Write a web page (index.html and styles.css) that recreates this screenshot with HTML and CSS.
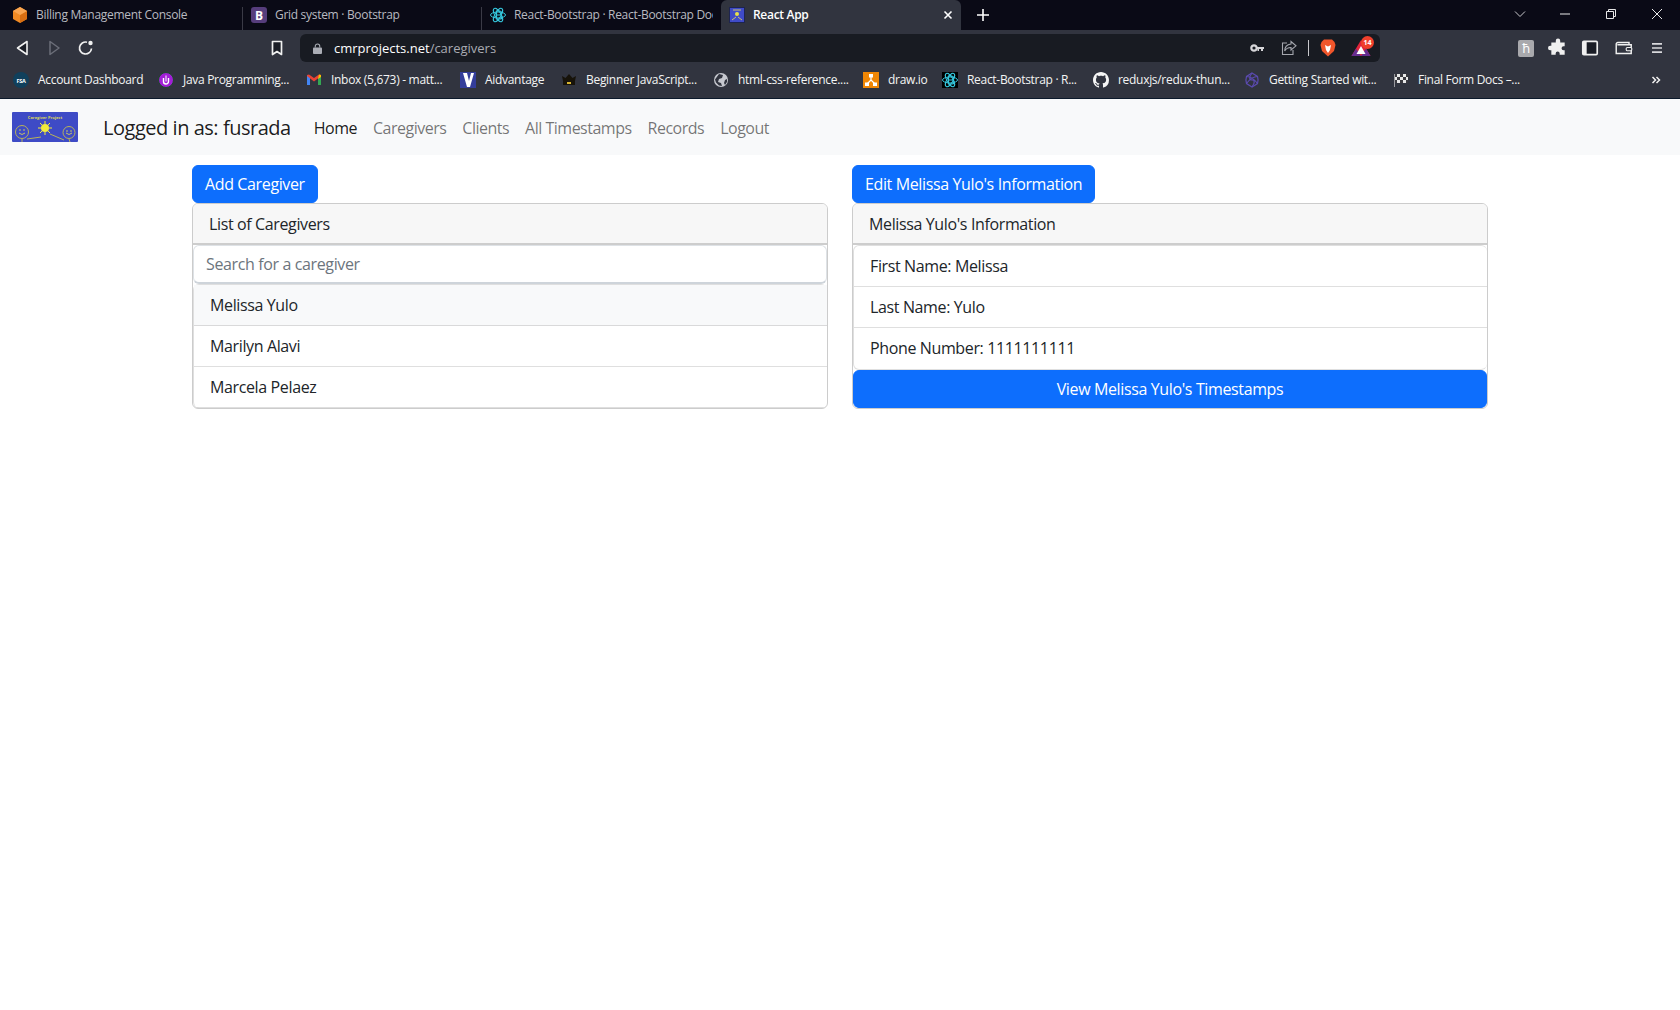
FILE: index.html
```html
<!DOCTYPE html>
<html lang="en">
<head>
<meta charset="utf-8">
<title>React App</title>
<link rel="stylesheet" href="styles.css">
</head>
<body>
<svg class="defs" width="0" height="0" aria-hidden="true">
  <defs>
    <symbol id="rb" viewBox="0 0 16 16">
      <g fill="none" stroke="#35c6dc" stroke-width="1">
        <ellipse cx="8" cy="8" rx="7.5" ry="3"/>
        <ellipse cx="8" cy="8" rx="7.5" ry="3" transform="rotate(60 8 8)"/>
        <ellipse cx="8" cy="8" rx="7.5" ry="3" transform="rotate(120 8 8)"/>
        <path d="M6.5 4h3a2 2 0 0 1 0 4h-3zM6.5 8h3.5a2 2 0 0 1 0 4H6.5z" stroke-width="1.2"/>
      </g>
    </symbol>
  </defs>
</svg>

<header class="browser">
  <div class="tabstrip">
    <div class="tab sep">
      <svg class="ico" viewBox="0 0 16 16"><path d="M8 0l7 4v8l-7 4-7-4V4z" fill="#f08a24"/><path d="M8 8l7-4v8l-7 4z" fill="#d96f12"/><path d="M8 0l7 4-7 4-7-4z" fill="#f9a550"/></svg>
      <span class="tab-title">Billing Management Console</span>
    </div>
    <div class="tab sep">
      <svg class="ico" viewBox="0 0 16 16"><rect width="16" height="16" rx="3" fill="#563d7c"/><text x="8" y="12.5" class="bs-b">B</text></svg>
      <span class="tab-title">Grid system · Bootstrap</span>
    </div>
    <div class="tab">
      <svg class="ico"><use href="#rb"/></svg>
      <span class="tab-title">React-Bootstrap · React-Bootstrap Docs</span>
    </div>
    <div class="tab tab-active">
      <svg class="ico" viewBox="0 0 16 16"><rect width="16" height="16" fill="#3f4bc8"/><rect x=".5" y=".5" width="15" height="15" fill="none" stroke="#1d2450"/><circle cx="8" cy="7" r="2" fill="#e8e04a"/><path d="M3 13l4-3M13 13l-4-3M4 3h8" stroke="#c9c070"/></svg>
      <span class="tab-title">React App</span>
      <svg class="tab-x" viewBox="0 0 10 10"><path d="M1.5 1.5l7 7M8.5 1.5l-7 7" stroke="#fff" stroke-width="1.6"/></svg>
    </div>
    <svg class="tab-plus" viewBox="0 0 12 12"><path d="M6 0v12M0 6h12" stroke="#fff" stroke-width="1.6"/></svg>
    <div class="win-controls">
      <svg class="win-chev" viewBox="0 0 12 12"><path d="M1 3.5l5 5 5-5" fill="none" stroke="#c8c8cc"/></svg>
      <svg class="win-ico" viewBox="0 0 12 12"><path d="M1 6h10" stroke="#e8e8e8"/></svg>
      <svg class="win-ico" viewBox="0 0 12 12"><path d="M1.5 3.5h7v7h-7zM3.5 3.5v-2h7v7h-2" fill="none" stroke="#e8e8e8"/></svg>
      <svg class="win-ico" viewBox="0 0 12 12"><path d="M1 1l10 10M11 1L1 11" stroke="#e8e8e8"/></svg>
    </div>
  </div>

  <div class="toolbar">
    <svg class="tb-ico tb-back" viewBox="0 0 20 20"><path d="M15 3.5v13L5.500 10z" fill="#1a1d26" stroke="#f0f0f0" stroke-width="1.600" stroke-linejoin="round"/></svg>
    <svg class="tb-ico tb-fwd" viewBox="0 0 20 20"><path d="M6 3.5v13l9-6.5z" fill="none" stroke="#6b6e79" stroke-width="1.5" stroke-linejoin="round"/></svg>
    <svg class="tb-ico tb-reload" viewBox="0 0 20 20"><path d="M15.500 10.500A6 6 0 1 1 11 4.200" fill="none" stroke="#f0f0f0" stroke-width="1.700"/><circle cx="14.500" cy="5" r="2.200" fill="#f0f0f0"/></svg>
    <svg class="tb-ico tb-mark" viewBox="0 0 20 20"><path d="M5.500 3.500h9v13L10 13.500 5.500 16.500z" fill="#1a1d26" stroke="#f0f0f0" stroke-width="1.700" stroke-linejoin="round"/></svg>
    <div class="urlbar">
      <svg class="lock" viewBox="0 0 10 12"><path d="M2.500 5V3.500a2.500 2.500 0 0 1 5 0V5" fill="none" stroke="#aaadb5" stroke-width="1.200"/><rect y="5" width="10" height="7" rx="1" fill="#aaadb5"/></svg>
      <span class="url"><span class="url-host">cmrprojects.net</span>/caregivers</span>
      <svg class="key" viewBox="0 0 14 8"><circle cx="4" cy="4" r="2.700" fill="none" stroke="#d5d5d8" stroke-width="2.200"/><path d="M6 3h8v2h-1v2h-2V5H9v2H7.500V5H6z" fill="#d5d5d8"/></svg>
      <svg class="share" viewBox="0 0 16 16"><path d="M6 3H1.500v11.500H12V10" fill="none" stroke="#a5a7ae" stroke-width="1.100"/><path d="M10 1.500l5 4.300-5 4.200V7.500c-3 0-5 1-6.300 3.500 0-3.500 2-6.500 6.300-7z" fill="none" stroke="#a5a7ae" stroke-width="1.100"/></svg>
      <span class="url-divider"></span>
      <svg class="brave" viewBox="0 0 16 18"><path d="M4 .500h8l2.500 2.500 1 3-1.500 6-6 5.500-6-5.500-1.500-6 1-3z" fill="#f1562b"/><path d="M5 6l3 1.500L11 6l-1 5-2 3-2-3z" fill="#fff"/></svg>
      <span class="bat">
        <svg class="bat-ico" viewBox="0 0 20 18"><path d="M10 1l9.500 16H.5z" fill="#e0243a"/><path d="M.5 17L5 9.500 10 17z" fill="#662d91"/><path d="M19.500 17L15 9.500 10 17z" fill="#662d91"/><path d="M10 7l4.500 8h-9z" fill="#fff"/></svg>
        <span class="bat-badge">14</span>
      </span>
    </div>
    <span class="ext-k">ħ</span>
    <svg class="tb-ico tb-puzzle" viewBox="-1 -1 18 18"><path d="M6 1.500a2 2 0 0 1 4 0V3h4v3.500h-1a1.800 1.800 0 0 0 0 3.600h1V14H9.500v-1a1.800 1.800 0 0 0-3.600 0v1H2v-4H1a2 2 0 0 1 0-4h1V3h4z" fill="#f0f0f0"/></svg>
    <svg class="tb-ico tb-side" viewBox="-1 -1 18 18"><rect x="1.500" y="2" width="13" height="12" rx="1" fill="#1a1d26" stroke="#f0f0f0" stroke-width="1.500"/><rect x="1.500" y="2" width="3.500" height="12" fill="#f0f0f0"/></svg>
    <svg class="tb-ico tb-wallet" viewBox="-1 -1 18 18"><path d="M1 4.500A1.500 1.500 0 0 1 2.500 3h10v2M1 4.500V13h13.500V5H2" fill="none" stroke="#f0f0f0" stroke-width="1.300"/><rect x="10" y="7.500" width="5" height="3" rx="1" fill="#31343f" stroke="#f0f0f0"/></svg>
    <svg class="tb-ico tb-menu" viewBox="-3 -3 22 22"><path d="M2.500 3.500h11M2.500 8h11M2.500 12.500h11" stroke="#d8d8dc" stroke-width="1.800"/></svg>
  </div>

  <nav class="bookmarks">
    <a class="bm"><svg class="ico" viewBox="0 0 16 16"><circle cx="8" cy="8" r="8" fill="#10405c"/><text x="8" y="10.500" class="fsa">FSA</text></svg><span>Account Dashboard</span></a>
    <a class="bm"><svg class="ico" viewBox="0 0 16 16"><circle cx="8" cy="8" r="7.500" fill="#a11fd6" stroke="#1a4a2a"/><path d="M5.500 6v3.500a2.500 2.500 0 0 0 5 0V6" fill="none" stroke="#fff" stroke-width="1.400"/><path d="M8 3.500v6" stroke="#fff"/></svg><span>Java Programming...</span></a>
    <a class="bm"><svg class="ico" viewBox="0 0 16 16"><path d="M1 13V4l3 0v9z" fill="#4285f4"/><path d="M12 13V4h3v9z" fill="#34a853"/><path d="M1 4l7 5.500L15 4v-1l-2-.500L8 6 3 2.500 1 3z" fill="#ea4335"/><path d="M13 2.500L15 3v2l-3 2z" fill="#fbbc04"/></svg><span>Inbox (5,673) - matt...</span></a>
    <a class="bm"><svg class="ico" viewBox="0 0 16 16"><rect width="16" height="16" fill="#333d9a"/><path d="M3 1h4l2 8 2-8h3L10 15H7z" fill="#fff"/></svg><span>Aidvantage</span></a>
    <a class="bm"><svg class="ico" viewBox="0 0 16 16"><path d="M2 9L1 4l3.500 2L8 2l3.500 4L15 4l-1 5z" fill="#17130a"/><rect x="2" y="9" width="12" height="4" fill="#17130a"/><rect x="6" y="10" width="4" height="2" fill="#d8b430"/></svg><span>Beginner JavaScript...</span></a>
    <a class="bm"><svg class="ico" viewBox="0 0 16 16"><circle cx="8" cy="8" r="7" fill="#c6c8cf"/><path d="M6 2l4 1-1 3-3 1-1 3 3 1 1 3-3-.500-3-3-1-3z" fill="#31343f"/><path d="M12 8l2-1 0 3-2 3-1-2z" fill="#31343f"/></svg><span>html-css-reference....</span></a>
    <a class="bm"><svg class="ico" viewBox="0 0 16 16"><rect width="16" height="16" fill="#f08705"/><path d="M8 5v3M8 8l-4 4M8 8l4 4" stroke="#fff" stroke-width="1.200"/><rect x="6" y="2" width="4" height="3.500" fill="#fff"/><rect x="2" y="10.500" width="4" height="3.500" fill="#fff"/><rect x="10" y="10.500" width="4" height="3.500" fill="#fff"/></svg><span>draw.io</span></a>
    <a class="bm"><svg class="ico ico-black"><use href="#rb"/></svg><span>React-Bootstrap · R...</span></a>
    <a class="bm"><svg class="ico" viewBox="0 0 16 16"><path fill="#f5f5f5" d="M8 0C3.580 0 0 3.580 0 8c0 3.540 2.290 6.530 5.470 7.590.4.070.55-.170.55-.380 0-.190-.010-.820-.010-1.490-2.010.370-2.530-.490-2.690-.940-.090-.230-.480-.940-.820-1.130-.280-.150-.680-.520-.010-.530.630-.010 1.080.580 1.230.820.720 1.210 1.870.870 2.330.660.070-.520.280-.870.510-1.070-1.780-.200-3.640-.890-3.640-3.950 0-.870.310-1.590.820-2.150-.080-.200-.360-1.020.080-2.120 0 0 .670-.210 2.200.820.640-.180 1.320-.270 2-.270s1.360.090 2 .270c1.530-1.040 2.200-.820 2.200-.820.440 1.100.160 1.920.080 2.120.510.560.820 1.270.820 2.150 0 3.070-1.870 3.750-3.650 3.950.290.250.540.730.540 1.480 0 1.070-.010 1.930-.010 2.200 0 .210.150.460.550.380A8.013 8.013 0 0 0 16 8c0-4.420-3.580-8-8-8z"/></svg><span>reduxjs/redux-thun...</span></a>
    <a class="bm"><svg class="ico" viewBox="0 0 16 16"><g fill="none" stroke="#5b4bb0" stroke-width="1.200"><path d="M8 1l5.500 3.500c1 3 1 4 0 7L8 15l-5.500-3.500c-1-3-1-4 0-7z"/><path d="M8 1C5 5 5 8 8 8s3 3 0 7M2.500 4.500c4 0 8 3 11 7M13.500 4.500c-4 0-8 3-11 7"/></g></svg><span>Getting Started wit...</span></a>
    <a class="bm"><svg class="ico" viewBox="0 0 16 16"><path d="M1 2l14 0v9l-14 0z" fill="#e8e8e8"/><path d="M1 2h3v3H1zM7 2h3v3H7zM13 2h2v3h-2zM4 5h3v3H4zM10 5h3v3h-3zM1 8h3v3H1zM7 8h3v3H7zM13 8h2v3h-2z" fill="#3a3a40"/><path d="M1.500 2v13" stroke="#9a9a9f"/></svg><span>Final Form Docs –...</span></a>
    <svg class="bm-more" viewBox="0 0 10 10"><path d="M1.500 2l3 3-3 3M5.500 2l3 3-3 3" fill="none" stroke="#f0f0f0" stroke-width="1.500"/></svg>
  </nav>
</header>

<nav class="navbar">
  <svg class="logo" viewBox="0 0 66 30">
    <rect width="66" height="30" rx="1" fill="#3e4bc6"/>
    <text x="33" y="6.500" class="logo-text">Caregiver Project</text>
    <g fill="none" stroke="#b7b25a" stroke-width="1">
      <circle cx="10" cy="20" r="6.500"/><circle cx="57" cy="20.500" r="6"/>
      <path d="M15 27l14-2M38 22l14 6M10 27v3M57 27l1 3"/>
    </g>
    <g fill="none" stroke="#e8e24a" stroke-width=".8">
      <path d="M7 21q3 3 6 0M54 21q3 3 6 0"/>
      <path d="M8 17v2M12 17v2M55 18v2M59 18v2"/>
    </g>
    <circle cx="33" cy="16" r="4" fill="#f2ec3a"/>
    <path d="M33 9v3M33 20v3M26 16h3M37 16h3M28 11l2 2M38 11l-2 2M28 21l2-2M38 21l-2-2" stroke="#f2ec3a"/>
  </svg>
  <span class="brand">Logged in as: fusrada</span>
  <ul class="nav">
    <li class="nav-link nav-active">Home</li>
    <li class="nav-link">Caregivers</li>
    <li class="nav-link">Clients</li>
    <li class="nav-link">All Timestamps</li>
    <li class="nav-link">Records</li>
    <li class="nav-link">Logout</li>
  </ul>
</nav>

<main class="container">
  <section class="col">
    <button class="btn">Add Caregiver</button>
    <div class="card">
      <div class="card-header">List of Caregivers</div>
      <input class="search" type="text" placeholder="Search for a caregiver">
      <ul class="list">
        <li class="item item-active">Melissa Yulo</li>
        <li class="item">Marilyn Alavi</li>
        <li class="item">Marcela Pelaez</li>
      </ul>
    </div>
  </section>
  <section class="col">
    <button class="btn">Edit Melissa Yulo's Information</button>
    <div class="card">
      <div class="card-header">Melissa Yulo's Information</div>
      <ul class="list list-info">
        <li class="item">First Name: Melissa</li>
        <li class="item">Last Name: Yulo</li>
        <li class="item">Phone Number: 1111111111</li>
      </ul>
      <button class="btn btn-block">View Melissa Yulo's Timestamps</button>
    </div>
  </section>
</main>
</body>
</html>
```

FILE: styles.css
```css
* { box-sizing: border-box; }
html, body { margin: 0; padding: 0; background: #fff; }
body { font-family: "Open Sans", "Noto Sans", sans-serif; font-size: 16px; line-height: 24px; color: #212529; letter-spacing: -0.37px; overflow: hidden; height: 1010px; }
.defs { display: block; height: 0; }
ul { list-style: none; margin: 0; padding: 0; }

/* Browser chrome */
.browser { background: #31343f; color: #f0f0f0; border-bottom: 1px solid #0c1a2c; font-size: 12px; letter-spacing: -0.3px; }
.ico { width: 16px; height: 16px; flex: none; }
.ico-black { background: #000; }
.tabstrip { height: 30px; background: #0a0a16; display: flex; align-items: flex-end; padding-left: 4px; }
.tab { width: 239px; height: 30px; display: flex; align-items: center; gap: 8px; padding: 0 8px; color: #b9bac0; }
.tab.sep { background: linear-gradient(#3a3a46, #3a3a46) right 7px / 1px 23px no-repeat; }
.tab-title { white-space: nowrap; overflow: hidden; flex: 1; }
.tab-active { width: 240px; background: #31343f; color: #fff; font-weight: 600; border-radius: 6px 6px 0 0; }
.tab-x { width: 10px; height: 10px; flex: none; }
.bs-b { font: 700 12px "Open Sans", sans-serif; fill: #fff; text-anchor: middle; }
.fsa { font: 700 5.500px "Open Sans", sans-serif; fill: #fff; text-anchor: middle; }
.tab-plus { width: 12px; height: 12px; margin: 0 0 9px 16px; flex: none; }
.win-controls { margin-left: auto; height: 30px; display: flex; align-items: center; padding-right: 17px; gap: 34px; padding-bottom: 2px; }
.win-chev { width: 12px; height: 12px; margin-right: -1px; }
.win-ico { width: 12px; height: 12px; }

.toolbar { height: 32px; display: flex; align-items: flex-end; }
.tb-ico { width: 20px; height: 20px; flex: none; margin-bottom: 4px; }
.tb-back { margin-left: 12px; }
.tb-fwd { margin-left: 12px; }
.tb-reload { margin-left: 12px; }
.tb-mark { margin-left: 171px; }
.urlbar { margin-left: 13px; width: 1080px; height: 28px; background: #181b22; border-radius: 6px; display: flex; align-items: center; padding: 0 7px 0 13px; font-size: 13px; color: #a9abb2; }
.lock { width: 9px; height: 11px; flex: none; }
.url { margin-left: 12px; white-space: nowrap; flex: 1; letter-spacing: 0; }
.url-host { color: #fff; }
.key { width: 14px; height: 8px; flex: none; margin-right: 17px; }
.share { width: 16px; height: 16px; flex: none; margin-right: 11px; }
.url-divider { width: 1px; height: 16px; background: #c9c9cd; margin-right: 11px; }
.brave { width: 16px; height: 18px; flex: none; margin-right: 15px; }
.bat { display: inline-flex; position: relative; width: 22px; height: 18px; flex: none; }
.bat-ico { width: 20px; height: 18px; }
.bat-badge { position: absolute; left: 10px; top: -3px; width: 13px; height: 13px; border-radius: 50%; background: #f0402c; color: #fff; font-size: 7px; font-weight: 700; line-height: 13px; text-align: center; letter-spacing: 0; }
.ext-k { width: 16px; height: 17px; margin: 0 0 5px 138px; background: #a9a9ad; color: #fff; border-radius: 2px; font-size: 13px; line-height: 17px; text-align: center; flex: none; }
.tb-puzzle { margin-left: 14px; }
.tb-side { margin-left: 12px; }
.tb-wallet { margin-left: 14px; }
.tb-menu { margin-left: 13px; }

.bookmarks { height: 36px; display: grid; grid-template-columns: 145px 148px 154px 101px 152px 150px 79px 151px 151px 149px 258px 20px; align-items: center; padding-left: 13px; }
.bm { display: flex; align-items: center; gap: 9px; white-space: nowrap; color: #f4f4f4; }
.bm-more { width: 10px; height: 10px; }

/* Page navbar */
.navbar { height: 56px; background: #f8f9fa; display: flex; align-items: center; padding: 1px 0 0 12px; }
.logo { width: 66px; height: 30px; flex: none; margin: -1px 25px 0 0; }
.logo-text { font: 700 4px "Open Sans", sans-serif; fill: #d9d45a; text-anchor: middle; letter-spacing: 0; }
.brand { font-size: 20px; line-height: 30px; color: rgba(0, 0, 0, .9); margin-right: 15px; white-space: nowrap; letter-spacing: -0.47px; }
.nav { display: flex; }
.nav-link { padding: 8px; color: rgba(0, 0, 0, .55); white-space: nowrap; letter-spacing: -0.5px; }
.nav-active { color: rgba(0, 0, 0, .9); }

/* Content */
.container { width: 1320px; margin: 0 0 0 180px; padding: 10px 12px 0; display: grid; grid-template-columns: 636px 636px; column-gap: 24px; align-items: start; }
.col { display: flex; flex-direction: column; align-items: flex-start; }
.btn { font: inherit; letter-spacing: inherit; line-height: 24px; height: 38px; padding: 6px 12px; border: 1px solid #0d6efd; border-radius: 6px; background: #0d6efd; color: #fff; white-space: nowrap; }
.btn-block { display: block; width: 100%; }
.card { width: 100%; border: 1px solid rgba(0, 0, 0, .2); border-radius: 6px; overflow: hidden; }
.card-header { height: 41px; padding: 8px 16px 0; background: #f7f7f7; border-bottom: 2px solid rgba(0, 0, 0, .17); }
.search { display: block; width: 100%; height: 39px; font: inherit; letter-spacing: inherit; padding: 6px 12px 7px; border: 1px solid #dee2e6; border-bottom: 2px solid #ced4da; border-radius: 6px; color: #212529; outline: none; }
.search::placeholder { color: #6c757d; opacity: 1; }
.list { border-radius: 6px; border: 1px solid rgba(0, 0, 0, .125); border-width: 1px 0 0 1px; }
.list-info { border-bottom: 1px solid rgba(0, 0, 0, .125); }
.item { height: 41px; padding: 8px 16px; border-bottom: 1px solid rgba(0, 0, 0, .125); }
.list-info .item:last-child { border-bottom: 0; }
.item-active { background: #f8f9fa; }
```
